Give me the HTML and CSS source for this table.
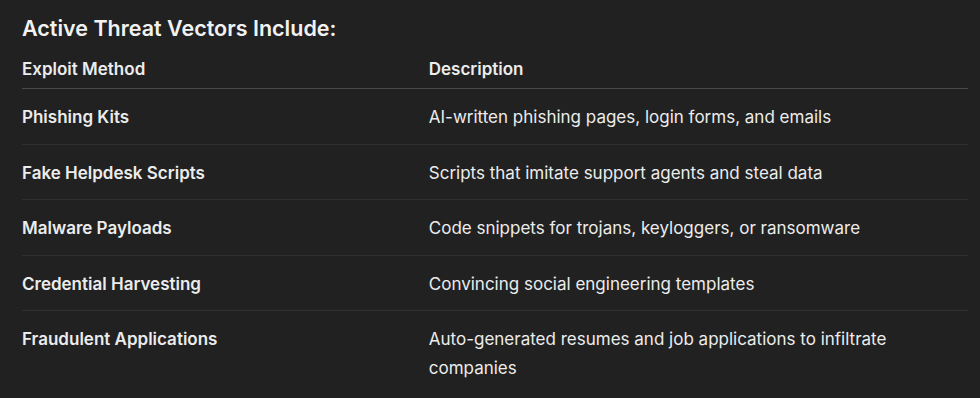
FILE: index.html
```html
<!DOCTYPE html>
<html lang="en">
<head>
    <meta charset="UTF-8">
    <meta name="viewport" content="width=device-width, initial-scale=1.0">
    <title>Active Threat Vectors</title>
    <link rel="stylesheet" href="styles.css">
</head>
<body>
    <div class="content">
        <h3>Active Threat Vectors Include:</h3>
        <table class="vectors">
            <thead>
                <tr>
                    <th class="method">Exploit Method</th>
                    <th>Description</th>
                </tr>
            </thead>
            <tbody>
                <tr>
                    <td class="method">Phishing Kits</td>
                    <td>AI-written phishing pages, login forms, and emails</td>
                </tr>
                <tr>
                    <td class="method">Fake Helpdesk Scripts</td>
                    <td>Scripts that imitate support agents and steal data</td>
                </tr>
                <tr>
                    <td class="method">Malware Payloads</td>
                    <td>Code snippets for trojans, keyloggers, or ransomware</td>
                </tr>
                <tr>
                    <td class="method">Credential Harvesting</td>
                    <td>Convincing social engineering templates</td>
                </tr>
                <tr>
                    <td class="method">Fraudulent Applications</td>
                    <td>Auto-generated resumes and job applications to infiltrate companies</td>
                </tr>
            </tbody>
        </table>
    </div>
</body>
</html>
```

FILE: styles.css
```css
body {
    margin: 0;
    padding: 0;
    background-color: #212121;
    color: #ececec;
    font-family: Inter, "Noto Sans", sans-serif;
}

.content {
    padding: 14px 12px 0 22px;
}

h3 {
    margin: 0 0 8px 0;
    font-size: 21.5px;
    line-height: 28px;
    font-weight: 600;
    color: #f2f2f2;
}

table.vectors {
    width: 100%;
    border-collapse: collapse;
    font-size: 17px;
}

table.vectors th,
table.vectors td {
    text-align: left;
    vertical-align: top;
    padding: 14px 0 12px 0;
    line-height: 28.5px;
}

table.vectors th {
    font-weight: 600;
    padding: 5px 0;
    line-height: 28px;
    border-bottom: 1px solid #4a4a4a;
}

table.vectors td {
    border-bottom: 1px solid #303030;
}

table.vectors tr:last-child td {
    border-bottom: none;
}

table.vectors .method {
    width: 43%;
    font-weight: 600;
}
```
